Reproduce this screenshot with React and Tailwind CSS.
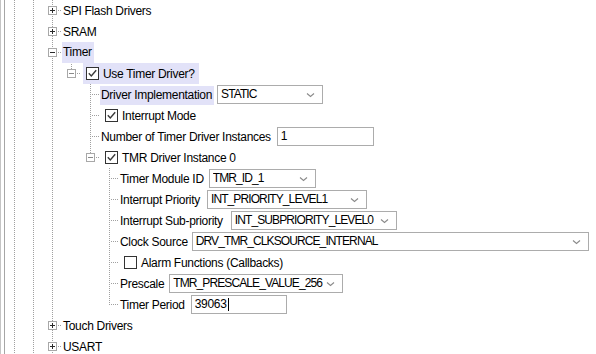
import React from "react";

const LINE = "#a0a0a0";

function TreeCell({ v, h, icon, odd }) {
  return (
    <svg width="19" height="21" className="block shrink-0" viewBox="0 0 19 21">
      {v && (
        <line x1="9.5" y1="0" x2="9.5" y2={v === "full" ? 21 : 11} stroke={LINE} strokeDasharray="1 1" strokeDashoffset={odd ? 1 : 0} />
      )}
      {h && <line x1="11" y1="10.5" x2="19" y2="10.5" stroke={LINE} strokeDasharray="1 1" />}
      {icon && (
        <g>
          <rect x="5.5" y="6.5" width="8" height="8" fill="#ffffff" stroke="#a8a8a8" />
          <line x1="7" y1="10.5" x2="12" y2="10.5" stroke={icon.endsWith("dim") ? "#8a8a8a" : "#2a2a2a"} />
          {icon.startsWith("plus") && <line x1="9.5" y1="8" x2="9.5" y2="13" stroke="#2a2a2a" />}
        </g>
      )}
    </svg>
  );
}

function Check({ checked }) {
  return (
    <svg width="13" height="13" viewBox="0 0 13 13" className="block shrink-0">
      <rect x="0.5" y="0.5" width="12" height="12" fill="#ffffff" stroke="#333333" />
      {checked && <path d="M2.8 6.3 L5.3 9 L10.2 3.2" fill="none" stroke="#3a3a3a" strokeWidth="1.4" />}
    </svg>
  );
}

function Chevron() {
  return (
    <svg width="9" height="6" viewBox="0 0 9 6" className="block shrink-0">
      <path d="M1 1.5 L4.5 4.5 L8 1.5" fill="none" stroke="#8a8a8a" strokeWidth="1.1" />
    </svg>
  );
}

function Select({ w, value }) {
  return (
    <div className={`flex h-[19px] items-center border border-[#acacac] bg-white pl-[3px] pr-[7px] ${w}`}>
      <span className="flex-1 overflow-hidden whitespace-nowrap leading-[17px] tracking-[-0.9px]">{value}</span>
      <Chevron />
    </div>
  );
}

function Input({ w, value, caret }) {
  return (
    <div className={`flex h-[19px] items-center border border-[#acacac] bg-white pl-[3px] ${w}`}>
      <span className="leading-[17px]">{value}</span>
      {caret && <span className="ml-px h-[13px] w-px bg-black" />}
    </div>
  );
}

function Row({ idx, cells, children }) {
  const odd = idx % 2 === 1;
  return (
    <div className="flex h-[21px] items-center whitespace-nowrap">
      <TreeCell v="full" odd={odd} />
      <TreeCell v="full" odd={odd} />
      {cells.map((c, i) => (
        <TreeCell key={i} v={c[0]} h={c[1]} icon={c[2]} odd={odd} />
      ))}
      <div className="flex h-[21px] items-center">{children}</div>
    </div>
  );
}

const L0 = (icon) => [["full", true, icon]];
const L2base = [["full"], [null]];
const L3base = [["full"], [null], [null]];

export default function App() {
  const hl = "bg-[#e2e2f8]";
  return (
    <div className="flex h-[354px] w-[596px] overflow-hidden bg-white text-[12px] tracking-[-0.3px] text-black font-['Liberation_Sans',Arial,sans-serif]">
      <div className="h-full w-[5px] shrink-0 border-l border-r border-l-[#c4c4c4] border-r-[#a6a6a6]" />
      <div className="flex flex-col">
        <Row idx={0} cells={L0("plus")}>
          <span className="pl-px">SPI Flash Drivers</span>
        </Row>
        <Row idx={1} cells={L0("plus")}>
          <span className="pl-px">SRAM</span>
        </Row>
        <Row idx={2} cells={L0("minus")}>
          <span className={`h-[21px] pl-px pr-[2px] leading-[21px] ${hl}`}>Timer</span>
        </Row>
        <Row idx={3} cells={[["full"], ["top", true, "minus-dim"]]}>
          <div className={`ml-[2px] flex h-[21px] items-center pl-[3px] pr-[4px] ${hl}`}>
            <Check checked />
            <span className="ml-[4px]">Use Timer Driver?</span>
          </div>
        </Row>
        <Row idx={4} cells={[...L2base, ["full", true]]}>
          <span className={`mt-[2px] h-[19px] pl-px pr-[2px] leading-[19px] ${hl}`}>Driver Implementation</span>
          <div className="ml-[3px]">
            <Select w="w-[106px]" value="STATIC" />
          </div>
        </Row>
        <Row idx={5} cells={[...L2base, ["full", true]]}>
          <div className="ml-[5px] flex items-center">
            <Check checked />
            <span className="ml-[4px]">Interrupt Mode</span>
          </div>
        </Row>
        <Row idx={6} cells={[...L2base, ["full", true]]}>
          <span className="pl-px pr-px">Number of Timer Driver Instances</span>
          <div className="ml-[5px]">
            <Input w="w-[97px]" value="1" />
          </div>
        </Row>
        <Row idx={7} cells={[...L2base, ["top", true, "minus-dim"]]}>
          <div className="ml-[5px] flex items-center">
            <Check checked />
            <span className="ml-[4px]">TMR Driver Instance 0</span>
          </div>
        </Row>
        <Row idx={8} cells={[...L3base, ["full", true]]}>
          <span className="pl-px pr-px">Timer Module ID</span>
          <div className="ml-[4px]">
            <Select w="w-[107px]" value="TMR_ID_1" />
          </div>
        </Row>
        <Row idx={9} cells={[...L3base, ["full", true]]}>
          <span className="pl-px pr-px">Interrupt Priority</span>
          <div className="ml-[6px]">
            <Select w="w-[160px]" value="INT_PRIORITY_LEVEL1" />
          </div>
        </Row>
        <Row idx={10} cells={[...L3base, ["full", true]]}>
          <span className="pl-px pr-px">Interrupt Sub-priority</span>
          <div className="ml-[7px]">
            <Select w="w-[166px]" value="INT_SUBPRIORITY_LEVEL0" />
          </div>
        </Row>
        <Row idx={11} cells={[...L3base, ["full", true]]}>
          <span className="pl-px pr-px">Clock Source</span>
          <div className="ml-[3px]">
            <Select w="w-[397px]" value="DRV_TMR_CLKSOURCE_INTERNAL" />
          </div>
        </Row>
        <Row idx={12} cells={[...L3base, ["full", true]]}>
          <div className="ml-[5px] flex items-center">
            <Check />
            <span className="ml-[4px]">Alarm Functions (Callbacks)</span>
          </div>
        </Row>
        <Row idx={13} cells={[...L3base, ["full", true]]}>
          <span className="pl-px pr-px">Prescale</span>
          <div className="ml-[4px]">
            <Select w="w-[174px]" value="TMR_PRESCALE_VALUE_256" />
          </div>
        </Row>
        <Row idx={14} cells={[...L3base, ["top", true]]}>
          <span className="pl-px pr-px">Timer Period</span>
          <div className="ml-[5px]">
            <Input w="w-[96px]" value="39063" caret />
          </div>
        </Row>
        <Row idx={15} cells={L0("plus")}>
          <span className="pl-px">Touch Drivers</span>
        </Row>
        <Row idx={16} cells={L0("plus")}>
          <span className="pl-px">USART</span>
        </Row>
      </div>
    </div>
  );
}
